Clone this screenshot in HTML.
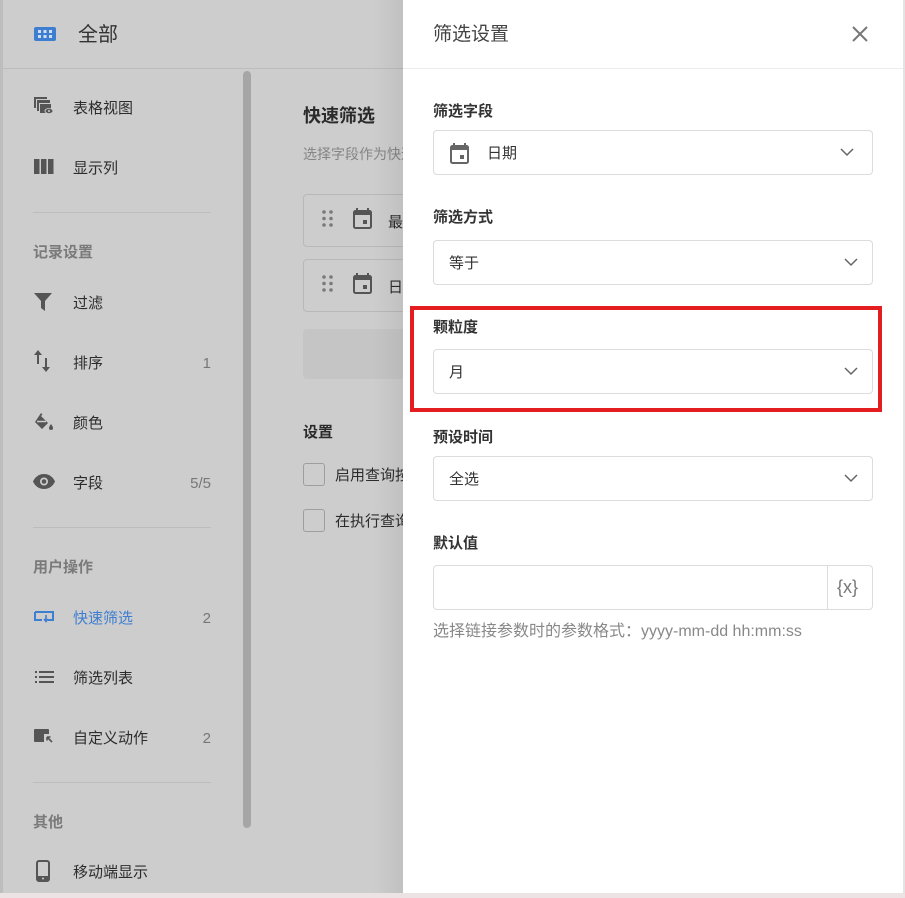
<!DOCTYPE html>
<html><head><meta charset="utf-8">
<style>
*{margin:0;padding:0;box-sizing:border-box}
body{width:905px;height:898px;overflow:hidden;background:#cdcdcd;font-family:"Liberation Sans","Noto Sans CJK SC",sans-serif;position:relative;color:#2c2c2c}
.abs{position:absolute}
.t{position:absolute;white-space:nowrap;line-height:1}
.ico{position:absolute}
.cnt{position:absolute;right:694px;font-size:15px;color:#777;line-height:1}
.div{position:absolute;left:33px;width:178px;height:1px;background:#bdbdbd}
.lab{position:absolute;left:433px;font-size:15px;font-weight:bold;color:#333;line-height:1}
.sel{position:absolute;left:433px;width:440px;height:45px;border:1px solid #dcdcdc;border-radius:4px;background:#fff}
.sel span{position:absolute;left:15px;top:15px;font-size:15px;color:#333;line-height:1}
.chev{position:absolute;right:14px;top:17px}
</style></head><body>
<div class="abs" style="left:0;top:0;width:3px;height:898px;background:#bdbdbd"></div>
<div class="abs" style="left:3px;top:68px;width:400px;height:1px;background:#bcbcbc"></div>
<svg class="ico" style="left:34px;top:27px" width="22" height="14"><rect width="22" height="14" rx="2" fill="#3e7ed0"/><g fill="#cfe0f5"><rect x="4" y="3" width="3" height="3"/><rect x="9.5" y="3" width="3" height="3"/><rect x="15" y="3" width="3" height="3"/><rect x="4" y="8" width="3" height="3"/><rect x="9.5" y="8" width="3" height="3"/><rect x="15" y="8" width="3" height="3"/></g></svg>
<div class="t" style="left:78px;top:25px;font-size:20px;color:#333">全部</div>
<div class="abs" style="left:243px;top:71px;width:8px;height:757px;border-radius:4px;background:#a6a6a6"></div>
<svg class="ico" style="left:34px;top:97px" width="20" height="18"><path d="M0 0h13v2H2v9H0z" fill="#555"/><path d="M3 3h13v3H5v8H3z" fill="#555"/><rect x="6" y="7" width="11" height="9" fill="#555"/><ellipse cx="15" cy="14" rx="4.5" ry="3" fill="#cdcdcd"/><ellipse cx="15" cy="14" rx="3.5" ry="2.2" fill="#555"/><circle cx="15" cy="14" r="1" fill="#cdcdcd"/></svg>
<div class="t" style="left:73px;top:101px;font-size:15px">表格视图</div>
<svg class="ico" style="left:34px;top:159px" width="20" height="15"><rect x="0" y="0" width="5.5" height="15" fill="#555"/><rect x="7" y="0" width="5.5" height="15" fill="#555"/><rect x="14" y="0" width="5.5" height="15" fill="#555"/></svg>
<div class="t" style="left:73px;top:161px;font-size:15px">显示列</div>
<div class="div" style="top:212px"></div>
<div class="t" style="left:33px;top:245px;font-size:15px;color:#7a7a7a;font-weight:bold">记录设置</div>
<svg class="ico" style="left:34px;top:293px" width="18" height="18"><path d="M0 0h18l-7 8v10l-4-3V8z" fill="#555"/></svg>
<div class="t" style="left:73px;top:296px;font-size:15px">过滤</div>
<svg class="ico" style="left:34px;top:350px" width="20" height="22"><path d="M4 0l4 5H5v9H3V5H0z" fill="#555"/><path d="M11 8h2v9h3l-4 5-4-5h3z" fill="#555"/></svg>
<div class="t" style="left:73px;top:356px;font-size:15px">排序</div>
<div class="cnt" style="top:356px">1</div>
<svg class="ico" style="left:34px;top:413px" width="20" height="18"><path d="M7 0l1.5 1.5L7 3l7 7-6 6-7-7z" fill="#555"/><path d="M3 8.5h9" stroke="#cdcdcd" stroke-width="1.5"/><path d="M17 11c1.5 2 2 3 2 4a2 2 0 0 1-4 0c0-1 .5-2 2-4z" fill="#555"/></svg>
<div class="t" style="left:73px;top:416px;font-size:15px">颜色</div>
<svg class="ico" style="left:33px;top:474px" width="22" height="15"><path d="M11 0C6 0 2 3 0 7.5 2 12 6 15 11 15s9-3 11-7.5C20 3 16 0 11 0z" fill="#555"/><circle cx="11" cy="7.5" r="4" fill="#cdcdcd"/><circle cx="11" cy="7.5" r="2.3" fill="#555"/></svg>
<div class="t" style="left:73px;top:476px;font-size:15px">字段</div>
<div class="cnt" style="top:476px">5/5</div>
<div class="div" style="top:527px"></div>
<div class="t" style="left:33px;top:560px;font-size:15px;color:#7a7a7a;font-weight:bold">用户操作</div>
<svg class="ico" style="left:34px;top:611px" width="20" height="12"><path d="M1 1h18v8h-5M8 9H1V1" fill="none" stroke="#3e7ed0" stroke-width="2"/><path d="M12 4v6M10 8l2 2.5 2-2.5" fill="none" stroke="#3e7ed0" stroke-width="1.6"/></svg>
<div class="t" style="left:73px;top:611px;font-size:15px;color:#3e7ed0">快速筛选</div>
<div class="cnt" style="top:611px">2</div>
<svg class="ico" style="left:35px;top:671px" width="19" height="12"><g fill="#555"><rect x="0" y="0" width="2" height="2"/><rect x="0" y="5" width="2" height="2"/><rect x="0" y="10" width="2" height="2"/><rect x="4" y="0" width="15" height="2"/><rect x="4" y="5" width="15" height="2"/><rect x="4" y="10" width="15" height="2"/></g></svg>
<div class="t" style="left:73px;top:671px;font-size:15px">筛选列表</div>
<svg class="ico" style="left:34px;top:729px" width="20" height="15"><path d="M0 1a1 1 0 0 1 1-1h13a1 1 0 0 1 1 1v4h-5v8H1a1 1 0 0 1-1-1z" fill="#555"/><path d="M13 8l5 5M13 8v3.5M13 8h3.5" stroke="#555" stroke-width="1.6" fill="none"/></svg>
<div class="t" style="left:73px;top:731px;font-size:15px">自定义动作</div>
<div class="cnt" style="top:731px">2</div>
<div class="div" style="top:782px"></div>
<div class="t" style="left:33px;top:815px;font-size:15px;color:#7a7a7a;font-weight:bold">其他</div>
<svg class="ico" style="left:36px;top:860px" width="14" height="22"><rect x="1" y="1" width="12" height="20" rx="2" fill="none" stroke="#555" stroke-width="2"/><rect x="1" y="16" width="12" height="5" fill="#555"/><circle cx="7" cy="18.5" r="1" fill="#cdcdcd"/></svg>
<div class="t" style="left:73px;top:865px;font-size:15px">移动端显示</div>
<div class="t" style="left:303px;top:107px;font-size:18px;font-weight:bold;color:#2a2a2a">快速筛选</div>
<div class="t" style="left:303px;top:147px;font-size:14px;color:#858585">选择字段作为快速筛选</div>
<div class="abs" style="left:303px;top:194px;width:140px;height:53px;border:1px solid #b8b8b8;border-radius:4px"></div>
<div class="abs" style="left:303px;top:259px;width:140px;height:53px;border:1px solid #b8b8b8;border-radius:4px"></div>
<svg class="ico" style="left:322px;top:210px" width="12" height="18"><g fill="#7a7a7a"><circle cx="2" cy="2" r="1.8"/><circle cx="9" cy="2" r="1.8"/><circle cx="2" cy="8.5" r="1.8"/><circle cx="9" cy="8.5" r="1.8"/><circle cx="2" cy="15" r="1.8"/><circle cx="9" cy="15" r="1.8"/></g></svg>
<svg class="ico" style="left:322px;top:275px" width="12" height="18"><g fill="#7a7a7a"><circle cx="2" cy="2" r="1.8"/><circle cx="9" cy="2" r="1.8"/><circle cx="2" cy="8.5" r="1.8"/><circle cx="9" cy="8.5" r="1.8"/><circle cx="2" cy="15" r="1.8"/><circle cx="9" cy="15" r="1.8"/></g></svg>
<svg class="ico" style="left:353px;top:208px" width="19" height="21"><path d="M4 0v3M15 0v3" stroke="#555" stroke-width="2"/><rect x="1" y="3" width="17" height="17" rx="1.5" fill="none" stroke="#555" stroke-width="2"/><rect x="1" y="3" width="17" height="4" fill="#555"/><rect x="10" y="12" width="4" height="4" fill="#555"/></svg>
<svg class="ico" style="left:353px;top:273px" width="19" height="21"><path d="M4 0v3M15 0v3" stroke="#555" stroke-width="2"/><rect x="1" y="3" width="17" height="17" rx="1.5" fill="none" stroke="#555" stroke-width="2"/><rect x="1" y="3" width="17" height="4" fill="#555"/><rect x="10" y="12" width="4" height="4" fill="#555"/></svg>
<div class="t" style="left:388px;top:215px;font-size:15px">最近</div>
<div class="t" style="left:388px;top:280px;font-size:15px">日期</div>
<div class="abs" style="left:303px;top:329px;width:140px;height:50px;border-radius:4px;background:#c5c5c5"></div>
<div class="t" style="left:303px;top:425px;font-size:15px;font-weight:bold;color:#2a2a2a">设置</div>
<div class="abs" style="left:303px;top:463px;width:22px;height:23px;border:1px solid #9e9e9e;border-radius:3px"></div>
<div class="abs" style="left:303px;top:509px;width:22px;height:23px;border:1px solid #9e9e9e;border-radius:3px"></div>
<div class="t" style="left:335px;top:468px;font-size:15px">启用查询按钮</div>
<div class="t" style="left:335px;top:514px;font-size:15px">在执行查询</div>
<div class="abs" style="left:373px;top:0;width:30px;height:893px;background:linear-gradient(to right,rgba(0,0,0,0),rgba(0,0,0,0.06))"></div>
<div class="abs" style="left:403px;top:0;width:500px;height:893px;background:#fff"></div>
<div class="abs" style="left:903px;top:0;width:2px;height:893px;background:#e4e4e4"></div>
<div class="abs" style="left:0;top:893px;width:905px;height:5px;background:#ece4e4"></div>
<div class="abs" style="left:403px;top:68px;width:500px;height:1px;background:#ececec"></div>
<div class="t" style="left:433px;top:25px;font-size:19px;color:#444">筛选设置</div>
<svg class="ico" style="left:852px;top:26px" width="16" height="16"><path d="M1 1l14 14M15 1L1 15" stroke="#777" stroke-width="2"/></svg>
<div class="lab" style="top:104px">筛选字段</div>
<div class="sel" style="top:130px"><svg class="ico" style="left:16px;top:12px" width="19" height="21"><path d="M4 0v3M15 0v3" stroke="#666" stroke-width="2"/><rect x="1" y="3" width="17" height="17" rx="1.5" fill="none" stroke="#666" stroke-width="2"/><rect x="1" y="3" width="17" height="4" fill="#666"/><rect x="10" y="12" width="4" height="4" fill="#666"/></svg><span style="left:53px">日期</span><svg class="chev" style="right:18px" width="14" height="9"><path d="M1 1l6 6 6-6" fill="none" stroke="#666" stroke-width="1.5"/></svg></div>
<div class="lab" style="top:210px">筛选方式</div>
<div class="sel" style="top:240px"><span>等于</span><svg class="chev" width="14" height="9"><path d="M1 1l6 6 6-6" fill="none" stroke="#666" stroke-width="1.5"/></svg></div>
<div class="abs" style="left:410px;top:306px;width:472px;height:106px;border:4px solid #e41e20"></div>
<div class="lab" style="top:320px">颗粒度</div>
<div class="sel" style="top:349px"><span>月</span><svg class="chev" width="14" height="9"><path d="M1 1l6 6 6-6" fill="none" stroke="#666" stroke-width="1.5"/></svg></div>
<div class="lab" style="top:430px">预设时间</div>
<div class="sel" style="top:456px"><span>全选</span><svg class="chev" width="14" height="9"><path d="M1 1l6 6 6-6" fill="none" stroke="#666" stroke-width="1.5"/></svg></div>
<div class="lab" style="top:536px">默认值</div>
<div class="sel" style="top:565px"><div class="abs" style="left:393px;top:0;width:1px;height:43px;background:#dcdcdc"></div><div class="t" style="left:403px;top:12px;font-size:18px;color:#777">{x}</div></div>
<div class="t" style="left:433px;top:624px;font-size:16px;color:#888">选择链接参数时的参数格式：yyyy-mm-dd hh:mm:ss</div>
</body></html>
